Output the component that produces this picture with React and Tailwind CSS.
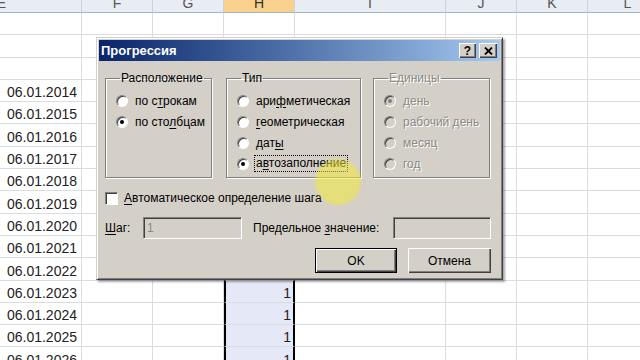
import React from 'react';

const cols = [
  { key: 'E', w: 'w-[160px]' },
  { key: 'F', w: 'w-[71px]' },
  { key: 'G', w: 'w-[71px]' },
  { key: 'H', w: 'w-[71px]' },
  { key: 'I', w: 'w-[151px]' },
  { key: 'J', w: 'w-[71px]' },
  { key: 'K', w: 'w-[71px]' },
  { key: 'L', w: 'w-[80px]' },
];

const dates = [
  '', '', '',
  '06.01.2014', '06.01.2015', '06.01.2016', '06.01.2017', '06.01.2018',
  '06.01.2019', '06.01.2020', '06.01.2021', '06.01.2022', '06.01.2023',
  '06.01.2024', '06.01.2025', '06.01.2026',
];

const Radio = ({ checked, disabled }) => (
  <span
    className={`relative flex h-[12px] w-[12px] shrink-0 items-center justify-center rounded-full border border-t-[#808080] border-l-[#808080] border-r-white border-b-white shadow-[inset_1px_1px_0_#404040] ${
      disabled ? 'bg-[#d4d0c8]' : 'bg-white'
    }`}
  >
    {checked && (
      <span className={`h-[4px] w-[4px] rounded-full ${disabled ? 'bg-[#808080]' : 'bg-black'}`} />
    )}
  </span>
);

const Option = ({ checked, disabled, focus, children }) => (
  <div className="flex h-[21px] items-center gap-[5px]">
    <Radio checked={checked} disabled={disabled} />
    <span
      className={`${disabled ? 'text-[#8c8a85] [text-shadow:1px_1px_0_#fff]' : 'text-black'} ${
        focus ? 'border border-dotted border-black px-[1px] leading-[15px]' : 'px-[2px]'
      }`}
    >
      {children}
    </span>
  </div>
);

const GroupBox = ({ title, width, disabled, children }) => (
  <fieldset
    className={`${width} h-[107px] border border-[#808080] pl-[10px] pt-[5px] shadow-[inset_1px_1px_0_#fff,1px_1px_0_#fff]`}
  >
    <legend className={`ml-[4px] px-[1px] leading-[14px] ${disabled ? 'text-[#8c8a85] [text-shadow:1px_1px_0_#fff]' : ''}`}>
      {title}
    </legend>
    {children}
  </fieldset>
);

const Sheet = () => (
  <div className="-ml-[78px] flex flex-col font-['Liberation_Sans',Arial,sans-serif] text-[14px] text-[#222]">
    {/* column headers */}
    <div className="flex h-[13px]">
      {cols.map((c) => (
        <div
          key={c.key}
          className={`${c.w} flex shrink-0 items-end justify-center overflow-hidden border-r border-b border-r-[#c9d3e0] border-b-[#9eb6ce] pb-[2px] leading-[14px] ${
            c.key === 'H' ? 'bg-[#f8d28c] text-[#333]' : 'bg-[#e8edf3] text-[#555]'
          }`}
        >
          {c.key}
        </div>
      ))}
    </div>
    {/* rows */}
    {dates.map((d, i) => (
      <div key={i} className="flex h-[22.3px]">
        {cols.map((c) => {
          const sel = c.key === 'H' && i >= 3;
          return (
            <div
              key={c.key}
              className={`${c.w} flex shrink-0 items-end justify-end border-r border-b border-[#d9dde3] pb-[1px] leading-[16px] ${
                sel ? 'border-l-2 border-r-2 border-l-black border-r-black bg-[#e4e8f7] pr-[2px]' : 'bg-white pr-[4px]'
              }`}
            >
              {c.key === 'E' && d}
              {sel && i >= 12 && '1'}
            </div>
          );
        })}
      </div>
    ))}
  </div>
);

const Dialog = () => (
  <div className="absolute left-[96px] top-[37px] flex h-[243px] w-[407px] flex-col border border-t-[#d4d0c8] border-l-[#d4d0c8] border-r-[#404040] border-b-[#404040] bg-[#d4d0c8] p-[2px] font-['Liberation_Sans',Arial,sans-serif] text-[12px] text-black shadow-[inset_1px_1px_0_#fff,inset_-1px_-1px_0_#808080,2px_2px_2px_rgba(0,0,0,0.35)]">
    {/* title bar */}
    <div className="flex h-[21px] items-center justify-between bg-gradient-to-r from-[#0a246a] to-[#a6caf0] pl-[2px] pr-[3px]">
      <span className="text-[13px] font-bold text-white">Прогрессия</span>
      <div className="flex gap-[3px]">
        <div className="flex h-[15px] w-[17px] items-center justify-center bg-[#d4d0c8] text-[12px] font-bold leading-none shadow-[inset_1px_1px_0_#fff,inset_-1px_-1px_0_#404040,inset_-2px_-2px_0_#808080]">
          ?
        </div>
        <div className="flex h-[15px] w-[18px] items-center justify-center bg-[#d4d0c8] shadow-[inset_1px_1px_0_#fff,inset_-1px_-1px_0_#404040,inset_-2px_-2px_0_#808080]">
          <svg width="9" height="8" viewBox="0 0 9 8">
            <path d="M1 0.5 L8 7.5 M8 0.5 L1 7.5" stroke="#000" strokeWidth="1.8" />
          </svg>
        </div>
      </div>
    </div>

    {/* body */}
    <div className="flex flex-col pl-[6px] pr-[9px]">
      <div className="mt-[10px] flex">
        <GroupBox title="Расположение" width="w-[107px]">
          <Option>по с<u className="underline-offset-2">т</u>рокам</Option>
          <Option checked>по сто<u className="underline-offset-2">л</u>бцам</Option>
        </GroupBox>
        <div className="ml-[14px]">
          <GroupBox title="Тип" width="w-[135px]">
            <Option>ари<u className="underline-offset-2">ф</u>метическая</Option>
            <Option><u className="underline-offset-2">г</u>еометрическая</Option>
            <Option>дат<u className="underline-offset-2">ы</u></Option>
            <Option checked focus>а<u className="underline-offset-2">в</u>тозаполнение</Option>
          </GroupBox>
        </div>
        <div className="ml-[12px]">
          <GroupBox title="Единицы" width="w-[117px]" disabled>
            <Option checked disabled>день</Option>
            <Option disabled>рабочий день</Option>
            <Option disabled>месяц</Option>
            <Option disabled>год</Option>
          </GroupBox>
        </div>
      </div>

      {/* checkbox */}
      <div className="mt-[12px] flex h-[16px] items-center gap-[6px]">
        <span className="h-[13px] w-[13px] border border-t-[#808080] border-l-[#808080] border-r-white border-b-white bg-white shadow-[inset_1px_1px_0_#404040]" />
        <span>
          <u className="underline-offset-2">А</u>втоматическое определение шага
        </span>
      </div>

      {/* step / limit */}
      <div className="mt-[11px] flex h-[22px] items-center">
        <span className="w-[38px]">
          <u className="underline-offset-2">Ш</u>аг:
        </span>
        <div className="flex h-[22px] w-[99px] items-center border border-t-[#808080] border-l-[#808080] border-r-white border-b-white pl-[3px] text-[#8c8a85] shadow-[inset_1px_1px_0_#404040]">
          1
        </div>
        <span className="ml-[11px] w-[140px]">
          Предельное <u className="underline-offset-2">з</u>начение:
        </span>
        <div className="h-[22px] w-[98px] border border-t-[#808080] border-l-[#808080] border-r-white border-b-white shadow-[inset_1px_1px_0_#404040]" />
      </div>

      {/* buttons */}
      <div className="mt-[9px] flex justify-end gap-[11px]">
        <button className="flex h-[25px] w-[82px] items-center justify-center border border-black bg-[#d4d0c8] shadow-[inset_1px_1px_0_#fff,inset_-1px_-1px_0_#404040,inset_-2px_-2px_0_#808080]">
          OK
        </button>
        <button className="flex h-[25px] w-[83px] items-center justify-center bg-[#d4d0c8] shadow-[inset_1px_1px_0_#fff,inset_-1px_-1px_0_#404040,inset_-2px_-2px_0_#808080]">
          Отмена
        </button>
      </div>
    </div>
  </div>
);

export default function App() {
  return (
    <div className="relative h-[360px] w-[640px] overflow-hidden bg-white">
      <Sheet />
      <Dialog />
      {/* cursor highlight from the screen recording */}
      <div className="pointer-events-none absolute left-[315px] top-[159px] h-[46px] w-[46px] rounded-full bg-[#f2ea3a]/55 blur-[1px]" />
    </div>
  );
}
